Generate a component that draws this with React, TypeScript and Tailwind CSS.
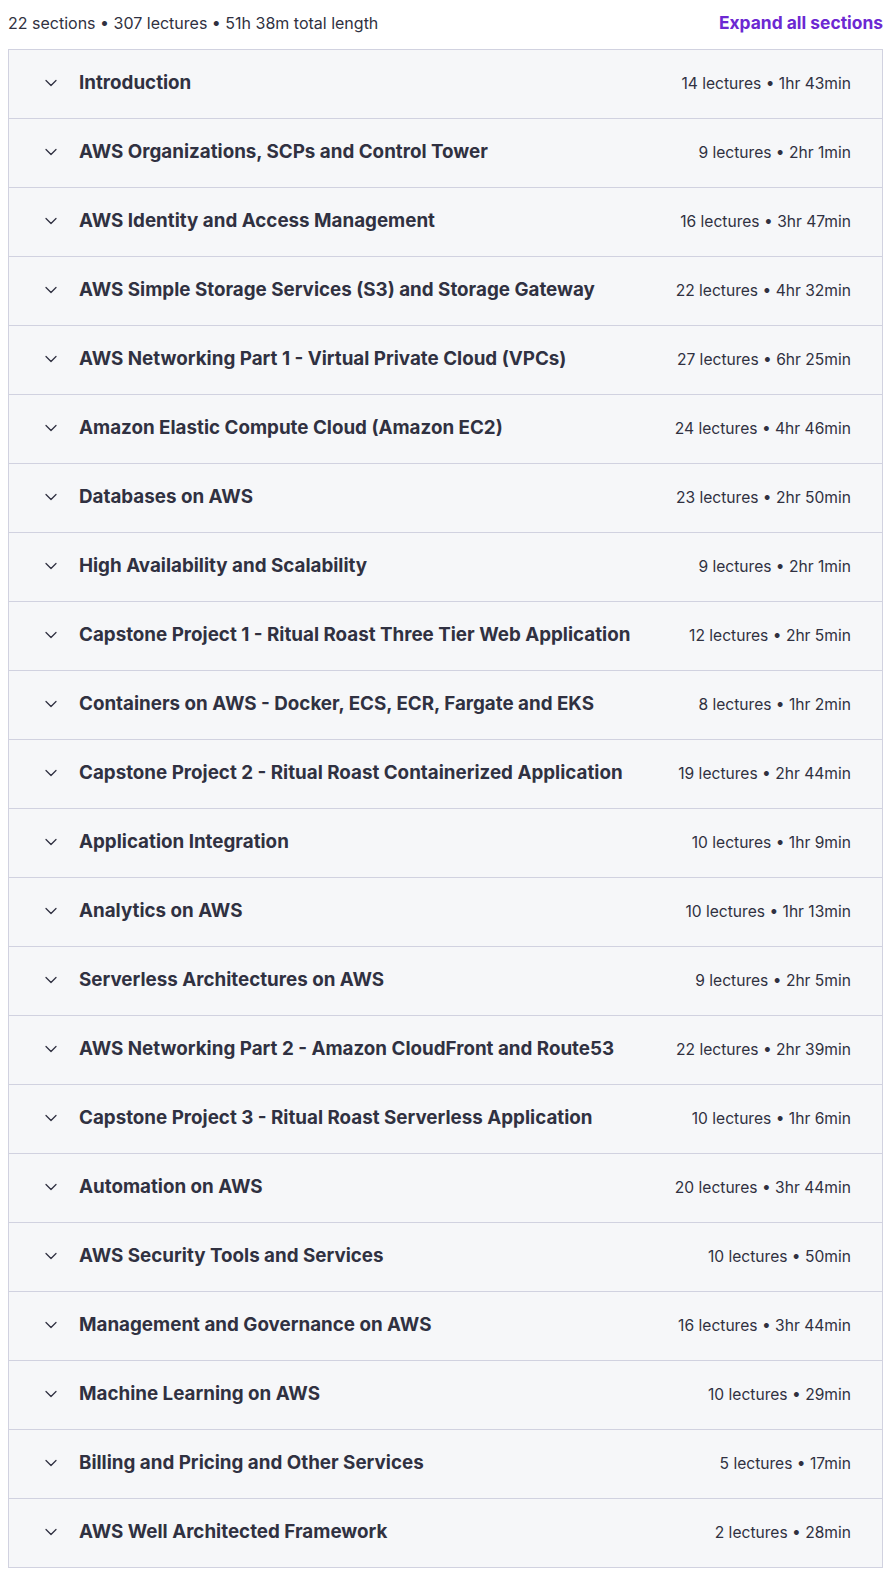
import { ChevronDown } from "lucide-react"

interface Section {
    title: string
    lectures: number
    length: string
}

const sections: Section[] = [
    { title: "Introduction", lectures: 14, length: "1hr 43min" },
    { title: "AWS Organizations, SCPs and Control Tower", lectures: 9, length: "2hr 1min" },
    { title: "AWS Identity and Access Management", lectures: 16, length: "3hr 47min" },
    { title: "AWS Simple Storage Services (S3) and Storage Gateway", lectures: 22, length: "4hr 32min" },
    { title: "AWS Networking Part 1 - Virtual Private Cloud (VPCs)", lectures: 27, length: "6hr 25min" },
    { title: "Amazon Elastic Compute Cloud (Amazon EC2)", lectures: 24, length: "4hr 46min" },
    { title: "Databases on AWS", lectures: 23, length: "2hr 50min" },
    { title: "High Availability and Scalability", lectures: 9, length: "2hr 1min" },
    { title: "Capstone Project 1 - Ritual Roast Three Tier Web Application", lectures: 12, length: "2hr 5min" },
    { title: "Containers on AWS - Docker, ECS, ECR, Fargate and EKS", lectures: 8, length: "1hr 2min" },
    { title: "Capstone Project 2 - Ritual Roast Containerized Application", lectures: 19, length: "2hr 44min" },
    { title: "Application Integration", lectures: 10, length: "1hr 9min" },
    { title: "Analytics on AWS", lectures: 10, length: "1hr 13min" },
    { title: "Serverless Architectures on AWS", lectures: 9, length: "2hr 5min" },
    { title: "AWS Networking Part 2 - Amazon CloudFront and Route53", lectures: 22, length: "2hr 39min" },
    { title: "Capstone Project 3 - Ritual Roast Serverless Application", lectures: 10, length: "1hr 6min" },
    { title: "Automation on AWS", lectures: 20, length: "3hr 44min" },
    { title: "AWS Security Tools and Services", lectures: 10, length: "50min" },
    { title: "Management and Governance on AWS", lectures: 16, length: "3hr 44min" },
    { title: "Machine Learning on AWS", lectures: 10, length: "29min" },
    { title: "Billing and Pricing and Other Services", lectures: 5, length: "17min" },
    { title: "AWS Well Architected Framework", lectures: 2, length: "28min" },
]

const CourseContent = () => {
    return (
        <div className="bg-white px-2 font-['Inter',sans-serif] text-[#303141]">
            <div className="flex h-[49px] items-center justify-between pb-[3px]">
                <span className="text-base">22 sections • 307 lectures • 51h 38m total length</span>
                <button className="text-[17.4px] font-bold text-[#6d28d2]">Expand all sections</button>
            </div>

            <div className="divide-y divide-[#d1d2e0] border border-[#d1d2e0]">
                {sections.map((s) => (
                    <div
                        key={s.title}
                        className="box-content flex h-[68px] items-center justify-between bg-[#f6f7f9] pl-[32px] pr-[31px]"
                    >
                        <div className="flex items-center gap-[18px] pb-[2px]">
                            <ChevronDown size={20} strokeWidth={1.5} />
                            <span className="text-[18.8px] font-bold">{s.title}</span>
                        </div>
                        <span className="pb-[1px] text-[15.6px] whitespace-nowrap">
                            {s.lectures} lectures • {s.length}
                        </span>
                    </div>
                ))}
            </div>
        </div>
    )
}

export default function App() {
    return <CourseContent />
}
